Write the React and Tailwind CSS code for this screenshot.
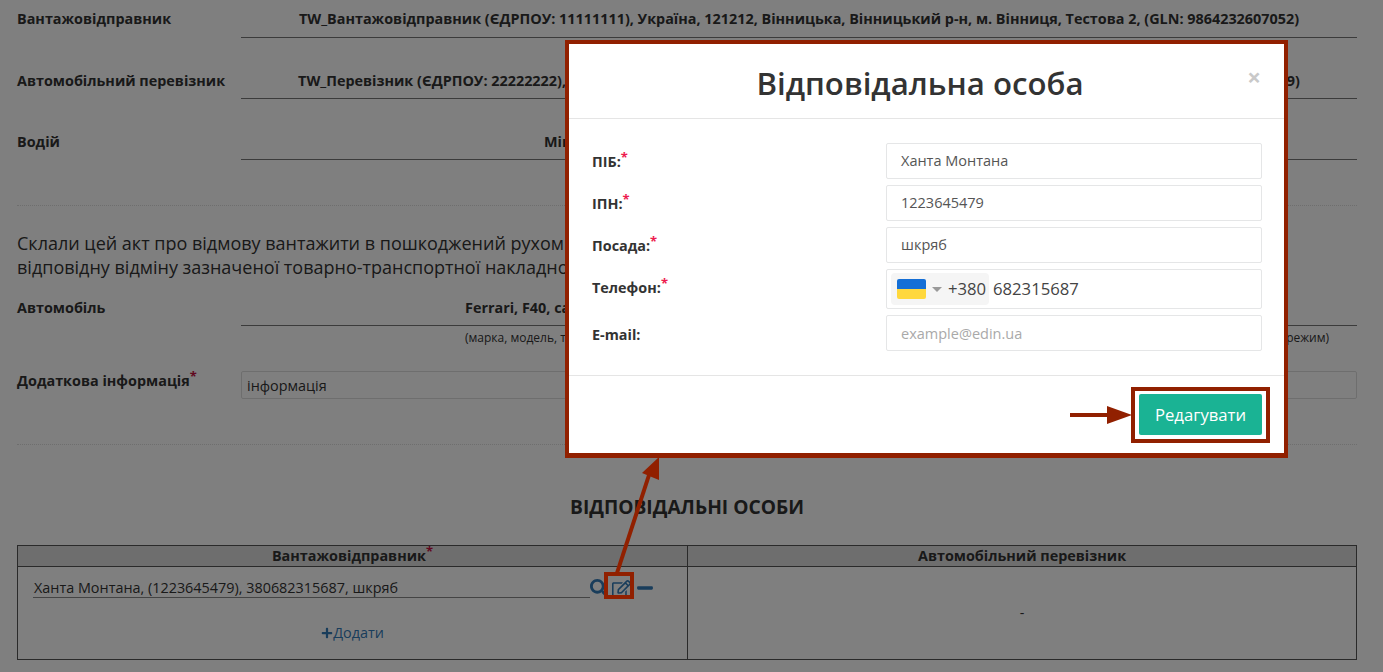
import React from "react";
import { FaRegEdit, FaSearch, FaMinus, FaPlus } from "react-icons/fa";

function Row({ label, value, align = "center", pad = 0, className = "", top = "pt-[10px]" }) {
  return (
    <div className={"flex h-[38px] " + className}>
      <div className={"w-[224px] shrink-0 text-[14.4px] leading-[20px] font-bold whitespace-nowrap " + top}>{label}</div>
      <div
        className={"flex-1 border-b border-[#777] text-[14.4px] leading-[20px] font-bold whitespace-nowrap overflow-hidden " + top + " " + (align === "center" ? "text-center" : "text-left")}
        style={pad ? { paddingLeft: pad } : undefined}
      >
        {value}
      </div>
    </div>
  );
}

function Star() {
  return <sup className="text-[#c3113f] text-[13px] font-bold leading-none top-[-5px]">*</sup>;
}

function Field({ label, star = true, children, h = "h-[36px]", labelTop = "pt-[9px]" }) {
  return (
    <div className="flex">
      <div className={"w-[294px] shrink-0 text-[14.4px] leading-[20px] font-bold text-[#333] " + labelTop}>
        {label}
        {star && <sup className="text-[#ed1c4f] text-[13px] font-bold leading-none top-[-5px]">*</sup>}
      </div>
      <div className={"flex-1 border border-[#e5e6e7] rounded-[2px] flex items-center " + h}>{children}</div>
    </div>
  );
}

export default function App() {
  return (
    <div className="relative h-[672px] overflow-hidden bg-white text-[#333] font-['Open_Sans',sans-serif]">
      <div className="pl-[17px] pr-[26px]">
        <Row top="pt-[9px]" label="Вантажовідправник" value="TW_Вантажовідправник (ЄДРПОУ: 11111111), Україна, 121212, Вінницька, Вінницький р-н, м. Вінниця, Тестова 2, (GLN: 9864232607052)" />
        <Row className="mt-[23px]" label="Автомобільний перевізник" value="TW_Перевізник (ЄДРПОУ: 22222222), Україна, 121212, Вінницька, Вінницький р-н, м. Вінниця, Тестова 2, офіс 123, (GLN: 9864232607059)" />
        <Row className="mt-[23px]" label="Водій" align="left" pad={303} value="Міщенко Іван Петрович" />
        <div className="mt-[45px] border-t border-dotted border-[#ddd]" />
        <p className="mt-[25px] text-[18px] leading-[24px] font-medium">
          Склали цей акт про відмову вантажити в пошкоджений рухомий склад та зробили<br />
          відповідну відміну зазначеної товарно-транспортної накладної
        </p>
        <Row className="mt-[9px]" label="Автомобіль" align="left" pad={224} value="Ferrari, F40, сарай" />
        <div className="flex justify-between pl-[448px] pr-[28px] pt-[2px] text-[12px] leading-[20px]">
          <span>(марка, модель, тип)</span>
          <span>(режим)</span>
        </div>
        <div className="flex mt-[23px]">
          <div className="w-[224px] shrink-0 text-[14.4px] leading-[19px] font-bold">
            Додаткова інформація<Star />
          </div>
          <div className="flex-1 h-[28px] border border-[#ddd] rounded-[2px] px-[5px] pt-[2px] flex items-center text-[14.4px] text-[#333]">інформація</div>
        </div>
        <div className="mt-[45px] border-t border-dotted border-[#ddd]" />
        <h2 className="mt-[49px] text-center text-[19.2px] leading-[26px] font-bold">ВІДПОВІДАЛЬНІ ОСОБИ</h2>
        <div className="mt-[25px] h-[115px] border border-[#555] grid grid-cols-[670px_1fr]">
          <div className="border-r border-[#555] flex flex-col">
            <div className="h-[21px] border-b border-[#555] bg-[#dcdcdc] text-center text-[14.4px] leading-[20px] font-bold">
              Вантажовідправник<Star />
            </div>
            <div className="flex items-start pl-[15px] pt-[11px]">
              <div className="w-[557px] pl-[1px] border-b border-[#888] text-[14.4px] leading-[19px] h-[20px] whitespace-nowrap">Ханта Монтана, (1223645479), 380682315687, шкряб</div>
              <div className="flex items-center gap-[4px] text-[#337ab7] h-[20px]">
                <FaSearch className="text-[18px]" />
                <FaRegEdit className="text-[19px]" />
                <FaMinus className="text-[18px] ml-[1px]" />
              </div>
            </div>
            <div className="mt-[25px] flex items-center justify-center text-[14.4px] leading-[20px] text-[#337ab7]">
              <FaPlus className="text-[12px]" />Додати
            </div>
          </div>
          <div className="flex flex-col">
            <div className="h-[21px] border-b border-[#555] bg-[#dcdcdc] text-center text-[14.4px] leading-[20px] font-bold">Автомобільний перевізник</div>
            <div className="flex-1 flex items-center justify-center text-[14.4px]">-</div>
          </div>
        </div>
      </div>

      <div className="absolute inset-0 bg-black/50" />

      <div className="absolute left-[565px] top-[40px] w-[723px] h-[418px] border-x-[4px] border-t-[4px] border-b-[5px] border-[#912000] bg-white">
        <div className="relative h-[75px] border-b border-[#e5e5e5] flex items-center justify-center pr-[13px]">
          <h1 className="text-[31.2px] leading-[36px] font-semibold text-[#333] mt-[4px] whitespace-nowrap">Відповідальна особа</h1>
          <span className="absolute right-[23px] top-[17px] text-[24px] leading-[32px] font-bold text-[#c9c9c9]">×</span>
        </div>
        <div className="pl-[23px] pr-[22px] pt-[24px] flex flex-col gap-[6px] h-[257px] border-b border-[#e5e5e5]">
          <Field label="ПІБ:"><span className="pl-[14px] pb-[1px] text-[14.5px] text-[#555]">Ханта Монтана</span></Field>
          <Field label="ІПН:"><span className="pl-[14px] pb-[1px] text-[14.5px] text-[#555]">1223645479</span></Field>
          <Field label="Посада:"><span className="pl-[14px] pb-[1px] text-[14.5px] text-[#555]">шкряб</span></Field>
          <Field label="Телефон:" h="h-[40px]">
            <div className="ml-[4px] h-[32px] w-[98px] bg-[#f5f5f5] rounded-[4px] flex items-center pl-[6px] text-[16.7px] text-[#444]">
              <div className="w-[29px] h-[20px] rounded-[2px] overflow-hidden flex flex-col shrink-0">
                <div className="flex-1 bg-[#156fd6]" />
                <div className="flex-1 bg-[#ffd83d]" />
              </div>
              <div className="ml-[6px] w-0 h-0 border-x-[5px] border-x-transparent border-t-[5px] border-t-[#999]" />
              <span className="ml-[6px]">+380</span>
            </div>
            <span className="pl-[4px] text-[16.7px] text-[#444]">682315687</span>
          </Field>
          <Field label="E-mail:" star={false} labelTop="pt-[10px]"><span className="pl-[14px] pt-[1px] text-[14.5px] text-[#a9a9a9]">example@edin.ua</span></Field>
        </div>
        <div className="flex justify-end items-start pr-[22px] pt-[18px]">
          <div className="h-[41px] w-[123px] rounded-[2px] bg-[#1ab394] text-white text-[16.7px] flex items-center justify-center">Редагувати</div>
        </div>
      </div>

      <div className="absolute left-[1131px] top-[387px] w-[139px] h-[56px] border-[4px] border-[#912000]" />
      <div className="absolute left-[604px] top-[572px] w-[30px] h-[27px] border-[4px] border-[#912000]" />

      <svg className="absolute left-0 top-0 pointer-events-none" width="1383" height="672" fill="none">
        <line x1="1070" y1="415" x2="1110" y2="415" stroke="#912000" strokeWidth="4" />
        <polygon points="1107,406 1132,415 1107,424" fill="#912000" />
        <line x1="617" y1="573" x2="650" y2="472" stroke="#912000" strokeWidth="4" />
        <polygon points="659,457 642,473 659,480" fill="#912000" />
      </svg>
    </div>
  );
}
